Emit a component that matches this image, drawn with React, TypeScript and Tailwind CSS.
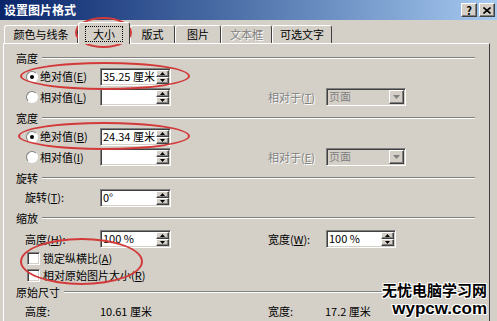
import React from "react";

const sunken =
  "border border-t-[#808080] border-l-[#808080] border-r-white border-b-white shadow-[inset_1px_1px_0_#404040,inset_-1px_-1px_0_#d4d0c8]";
const raised =
  "border border-t-white border-l-white border-r-[#404040] border-b-[#404040] shadow-[inset_-1px_-1px_0_#808080]";

function Key({ k }: { k: string }) {
  return (
    <span>
      (<span className="underline">{k}</span>)
    </span>
  );
}

function SpinBox({ value, w = 71 }: { value?: string; w?: number }) {
  return (
    <div className={`flex h-[18px] bg-white ${sunken}`} style={{ width: w }}>
      <span className="flex-1 pl-[2px] text-[11px] leading-[15px] text-black whitespace-pre">{value}</span>
      <div className="flex w-[15px] flex-col p-px">
        <div className={`flex flex-1 items-center justify-center bg-[#d4d0c8] ${raised}`}>
          <svg width="5" height="3" viewBox="0 0 5 3">
            <path d="M2.5 0L5 3H0z" fill="#000" />
          </svg>
        </div>
        <div className={`flex flex-1 items-center justify-center bg-[#d4d0c8] ${raised}`}>
          <svg width="5" height="3" viewBox="0 0 5 3">
            <path d="M0 0H5L2.5 3z" fill="#000" />
          </svg>
        </div>
      </div>
    </div>
  );
}

function Combo() {
  return (
    <div className={`flex h-[18px] w-[80px] bg-[#d4d0c8] ${sunken}`}>
      <span className="flex-1 pl-[2px] text-[11px] leading-[15px] text-[#808080]">页面</span>
      <div className={`m-px flex w-[15px] items-center justify-center bg-[#d4d0c8] ${raised}`}>
        <svg width="7" height="4" viewBox="0 0 7 4">
          <path d="M0 0H7L3.5 4z" fill="#808080" />
        </svg>
      </div>
    </div>
  );
}

function Radio({ checked }: { checked?: boolean }) {
  return (
    <div className="flex h-[12px] w-[12px] items-center justify-center rounded-full border border-t-[#808080] border-l-[#808080] border-r-white border-b-white bg-white">
      {checked && <div className="h-[4px] w-[4px] rounded-full bg-black" />}
    </div>
  );
}

function Check() {
  return <div className={`h-[13px] w-[13px] bg-white ${sunken}`} />;
}

function Header({ title, className = "" }: { title: string; className?: string }) {
  return (
    <div className={`flex h-[16px] items-center pl-[12px] pr-[14px] ${className}`}>
      <span className="pr-[4px] text-[11px] text-black">{title}</span>
      <div className="h-[2px] flex-1 border-t border-b border-t-[#808080] border-b-white" />
    </div>
  );
}

function Tab({ label, w, active, disabled }: { label: string; w: number; active?: boolean; disabled?: boolean }) {
  return (
    <div
      className={`flex items-center justify-center rounded-t-[3px] border-t border-l border-r border-t-white border-l-white border-r-[#404040] bg-[#d4d0c8] text-[11px] ${
        active ? "relative z-10 -mb-px h-[22px]" : "h-[18px]"
      } ${disabled ? "text-[#808080] [text-shadow:1px_1px_0_#fff]" : "text-black"}`}
      style={{ width: w }}
    >
      {active ? (
        <span className="border border-dotted border-black px-[7px] leading-[14px]">{label}</span>
      ) : (
        label
      )}
    </div>
  );
}

export default function App() {
  return (
    <div
      className="relative h-[321px] w-[497px] overflow-hidden bg-[#d4d0c8]"
      style={{ fontFamily: '"Noto Sans CJK SC", "Liberation Sans", sans-serif' }}
    >
      {/* title bar */}
      <div className="flex h-[20px] items-center bg-gradient-to-r from-[#0a246a] to-[#a6caf0] pl-[4px] pr-[2px]">
        <span className="flex-1 text-[12px] font-bold leading-none text-white">设置图片格式</span>
        <div className="flex gap-[2px]">
          <div className={`flex h-[14px] w-[16px] items-center justify-center bg-[#d4d0c8] text-[11px] font-bold leading-none text-black ${raised}`}>
            ?
          </div>
          <div className={`flex h-[14px] w-[16px] items-center justify-center bg-[#d4d0c8] ${raised}`}>
            <svg width="8" height="7" viewBox="0 0 8 7">
              <path d="M0.5 0.5L7.5 6.5M7.5 0.5L0.5 6.5" stroke="#000" strokeWidth="1.6" />
            </svg>
          </div>
        </div>
      </div>

      {/* tabs */}
      <div className="mt-[2px] flex h-[21px] items-end pl-[4px]">
        <Tab label="颜色与线条" w={74} />
        <Tab label="大小" w={52} active />
        <Tab label="版式" w={45} />
        <Tab label="图片" w={46} />
        <Tab label="文本框" w={51} disabled />
        <Tab label="可选文字" w={60} />
      </div>

      {/* panel */}
      <div className="ml-[3px] h-[300px] w-[487px] border-t border-l border-r border-t-white border-l-white border-r-[#404040] text-[11px] text-black">
        <Header title="高度" className="mt-[6px]" />
        <div className="flex h-[21px] items-center">
          <div className="ml-[22px] mr-[2px]"><Radio checked /></div>
          <span className="w-[60px]">绝对值<Key k="E" /></span>
          <SpinBox value="35.25 厘米" />
        </div>
        <div className="flex h-[20px] items-center">
          <div className="ml-[22px] mr-[2px]"><Radio /></div>
          <span className="w-[60px]">相对值<Key k="L" /></span>
          <SpinBox />
          <span className="ml-[97px] w-[58px] text-[#808080] [text-shadow:1px_1px_0_#fff]">相对于<Key k="T" /></span>
          <Combo />
        </div>

        <Header title="宽度" className="mt-[3px]" />
        <div className="flex h-[21px] items-center">
          <div className="ml-[22px] mr-[2px]"><Radio checked /></div>
          <span className="w-[60px]">绝对值<Key k="B" /></span>
          <SpinBox value="24.34 厘米" />
        </div>
        <div className="flex h-[20px] items-center">
          <div className="ml-[22px] mr-[2px]"><Radio /></div>
          <span className="w-[60px]">相对值<Key k="I" /></span>
          <SpinBox />
          <span className="ml-[97px] w-[58px] text-[#808080] [text-shadow:1px_1px_0_#fff]">相对于<Key k="E" /></span>
          <Combo />
        </div>

        <Header title="旋转" className="mt-[3px]" />
        <div className="flex h-[23px] items-center">
          <span className="ml-[21px] w-[75px]">旋转<Key k="T" />:</span>
          <SpinBox value="0°" />
        </div>

        <Header title="缩放" className="mt-[1px]" />
        <div className="mt-[2px] flex h-[22px] items-center">
          <span className="ml-[21px] w-[75px]">高度<Key k="H" />:</span>
          <SpinBox value="100 %" />
          <span className="ml-[97px] w-[58px]">宽度<Key k="W" />:</span>
          <SpinBox value="100 %" w={70} />
        </div>
        <div className="flex h-[17px] items-center">
          <div className="ml-[23px] mr-[3px]"><Check /></div>
          <span>锁定纵横比<Key k="A" /></span>
        </div>
        <div className="flex h-[17px] items-center">
          <div className="ml-[23px] mr-[3px]"><Check /></div>
          <span>相对原始图片大小<Key k="R" /></span>
        </div>

        <Header title="原始尺寸" />
        <div className="mt-[1px] flex h-[20px] items-center">
          <span className="ml-[21px] w-[75px]">高度:</span>
          <span className="w-[168px]">10.61 厘米</span>
          <span className="w-[57px]">宽度:</span>
          <span>17.2 厘米</span>
        </div>
      </div>

      {/* red annotation ellipses */}
      <div className="pointer-events-none absolute left-[75px] top-[17px] h-[31px] w-[57px] rounded-[50%] border-2 border-[#d23a3a]" />
      <div className="pointer-events-none absolute left-[20px] top-[62px] h-[28px] w-[170px] rounded-[50%] border-2 border-[#d23a3a]" />
      <div className="pointer-events-none absolute left-[18px] top-[122px] h-[28px] w-[172px] rounded-[50%] border-2 border-[#d23a3a]" />
      <div className="pointer-events-none absolute left-[20px] top-[238px] h-[47px] w-[123px] rounded-[50%] border-2 border-[#d23a3a]" />

      {/* watermark */}
      <div className="pointer-events-none absolute left-[382px] top-[280px] flex flex-col items-end gap-[1px] text-black [text-shadow:1px_1px_0_#fff,-1px_-1px_0_#fff,1px_-1px_0_#fff,-1px_1px_0_#fff]">
        <span className="h-[19px] text-[15px] font-bold leading-[19px]">无忧电脑学习网</span>
        <span className="h-[18px] text-[17px] font-bold leading-[18px]" style={{ fontFamily: '"Liberation Sans", sans-serif' }}>wypcw.com</span>
      </div>
    </div>
  );
}
